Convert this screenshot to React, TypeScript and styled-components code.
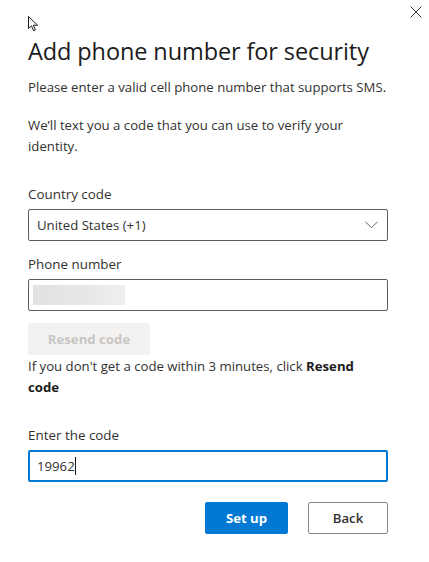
import React from "react";
import styled, { createGlobalStyle } from "styled-components";

const Global = createGlobalStyle`
  html, body { margin: 0; padding: 0; background: #ffffff; }
  body { font-family: "Open Sans", "Noto Sans", sans-serif; color: #323130; }
  * { box-sizing: border-box; }
`;

const Dialog = styled.div`
  position: relative;
  width: 429px;
  height: 562px;
  padding: 35px 35px 0 28px;
  display: flex;
  flex-direction: column;
`;

const Close = styled.button`
  position: absolute;
  top: 5px;
  right: 6px;
  width: 14px;
  height: 14px;
  padding: 0;
  border: none;
  background: none;
  display: flex;
  align-items: center;
  justify-content: center;
`;

const Pointer = styled.div`
  position: absolute;
  left: 28px;
  top: 16px;
  width: 12px;
  height: 17px;
`;

const Title = styled.h1`
  margin: 0;
  font-size: 23.5px;
  line-height: 32px;
  font-weight: 500;
  color: #1b1b1b;
  letter-spacing: -0.1px;
`;

const Text = styled.p<{ $mt: number; $w?: number }>`
  margin: ${(p) => p.$mt}px 0 0;
  max-width: ${(p) => p.$w ?? 366}px;
  font-size: 13.2px;
  line-height: 21px;
  color: #323130;
`;

const Strong = styled.b`
  font-weight: 700;
  color: #1b1b1b;
`;

const Label = styled.label<{ $mt: number }>`
  display: block;
  margin-top: ${(p) => p.$mt}px;
  font-size: 13.4px;
  line-height: 21px;
  font-weight: 500;
  color: #323130;
`;

const Field = styled.div<{ $focus?: boolean; $mt?: number }>`
  margin-top: ${(p) => p.$mt ?? 4}px;
  height: 32px;
  width: 360px;
  border: ${(p) => (p.$focus ? "2px solid #0078d4" : "1px solid #605e5c")};
  border-radius: 2px;
  display: flex;
  align-items: center;
  padding: 0 ${(p) => (p.$focus ? 7 : 8)}px;
  font-size: 13.2px;
  color: #323130;
`;

const Chevron = styled.span`
  margin-left: auto;
  margin-right: 1px;
  display: flex;
`;

const Masked = styled.div`
  width: 92px;
  height: 20px;
  margin-left: -4px;
  background: linear-gradient(90deg, #e2e2e2 0%, #e6e6e6 50%, #efefef 100%);
`;

const Caret = styled.span`
  display: inline-block;
  width: 1px;
  height: 18px;
  background: #1b1b1b;
`;

const Disabled = styled.button`
  margin-top: 12px;
  width: 122px;
  height: 32px;
  border: none;
  border-radius: 2px;
  background: #f3f2f1;
  color: #c8c6c4;
  font-family: inherit;
  font-size: 13.2px;
  font-weight: 700;
  padding: 0;
`;

const Actions = styled.div`
  margin-top: 20px;
  display: flex;
  justify-content: flex-end;
  gap: 20px;
  width: 360px;
`;

const Btn = styled.button<{ $primary?: boolean }>`
  height: 32px;
  width: ${(p) => (p.$primary ? 83 : 80)}px;
  border-radius: 2px;
  font-family: inherit;
  font-size: 13.2px;
  font-weight: ${(p) => (p.$primary ? 700 : 600)};
  padding: 0;
  border: 1px solid ${(p) => (p.$primary ? "#0078d4" : "#8a8886")};
  background: ${(p) => (p.$primary ? "#0078d4" : "#ffffff")};
  color: ${(p) => (p.$primary ? "#ffffff" : "#323130")};
`;

export default function App() {
  return (
    <>
      <Global />
      <Dialog>
        <Pointer>
          <svg width="12" height="17" viewBox="0 0 12 17">
            <path
              d="M0.5 0.5 L0.5 12.5 L3.5 9.8 L5.6 14.8 L7.4 14 L5.4 9.2 L9.6 9.2 Z"
              fill="#ffffff"
              stroke="#1b1b1b"
              strokeWidth="1"
              strokeLinejoin="miter"
            />
          </svg>
        </Pointer>
        <Close aria-label="Close">
          <svg width="12" height="12" viewBox="0 0 12 12">
            <path d="M0.5 0.5 L11.5 11.5 M11.5 0.5 L0.5 11.5" stroke="#3b3a39" strokeWidth="1" />
          </svg>
        </Close>
        <Title>Add phone number for security</Title>
        <Text $mt={10}>Please enter a valid cell phone number that supports SMS.</Text>
        <Text $mt={17} $w={355}>We’ll text you a code that you can use to verify your identity.</Text>
        <Label $mt={27}>Country code</Label>
        <Field>
          United States (+1)
          <Chevron>
            <svg width="13" height="8" viewBox="0 0 13 8">
              <path d="M0.5 0.8 L6.5 6.8 L12.5 0.8" fill="none" stroke="#605e5c" strokeWidth="1" />
            </svg>
          </Chevron>
        </Field>
        <Label $mt={13}>Phone number</Label>
        <Field>
          <Masked />
        </Field>
        <Disabled disabled>Resend code</Disabled>
        <Text $mt={1} $w={340}>
          If you don't get a code within 3 minutes, click <Strong>Resend</Strong> <Strong>code</Strong>
        </Text>
        <Label $mt={27}>Enter the code</Label>
        <Field $focus>
          19962
          <Caret />
        </Field>
        <Actions>
          <Btn $primary>Set up</Btn>
          <Btn>Back</Btn>
        </Actions>
      </Dialog>
    </>
  );
}
